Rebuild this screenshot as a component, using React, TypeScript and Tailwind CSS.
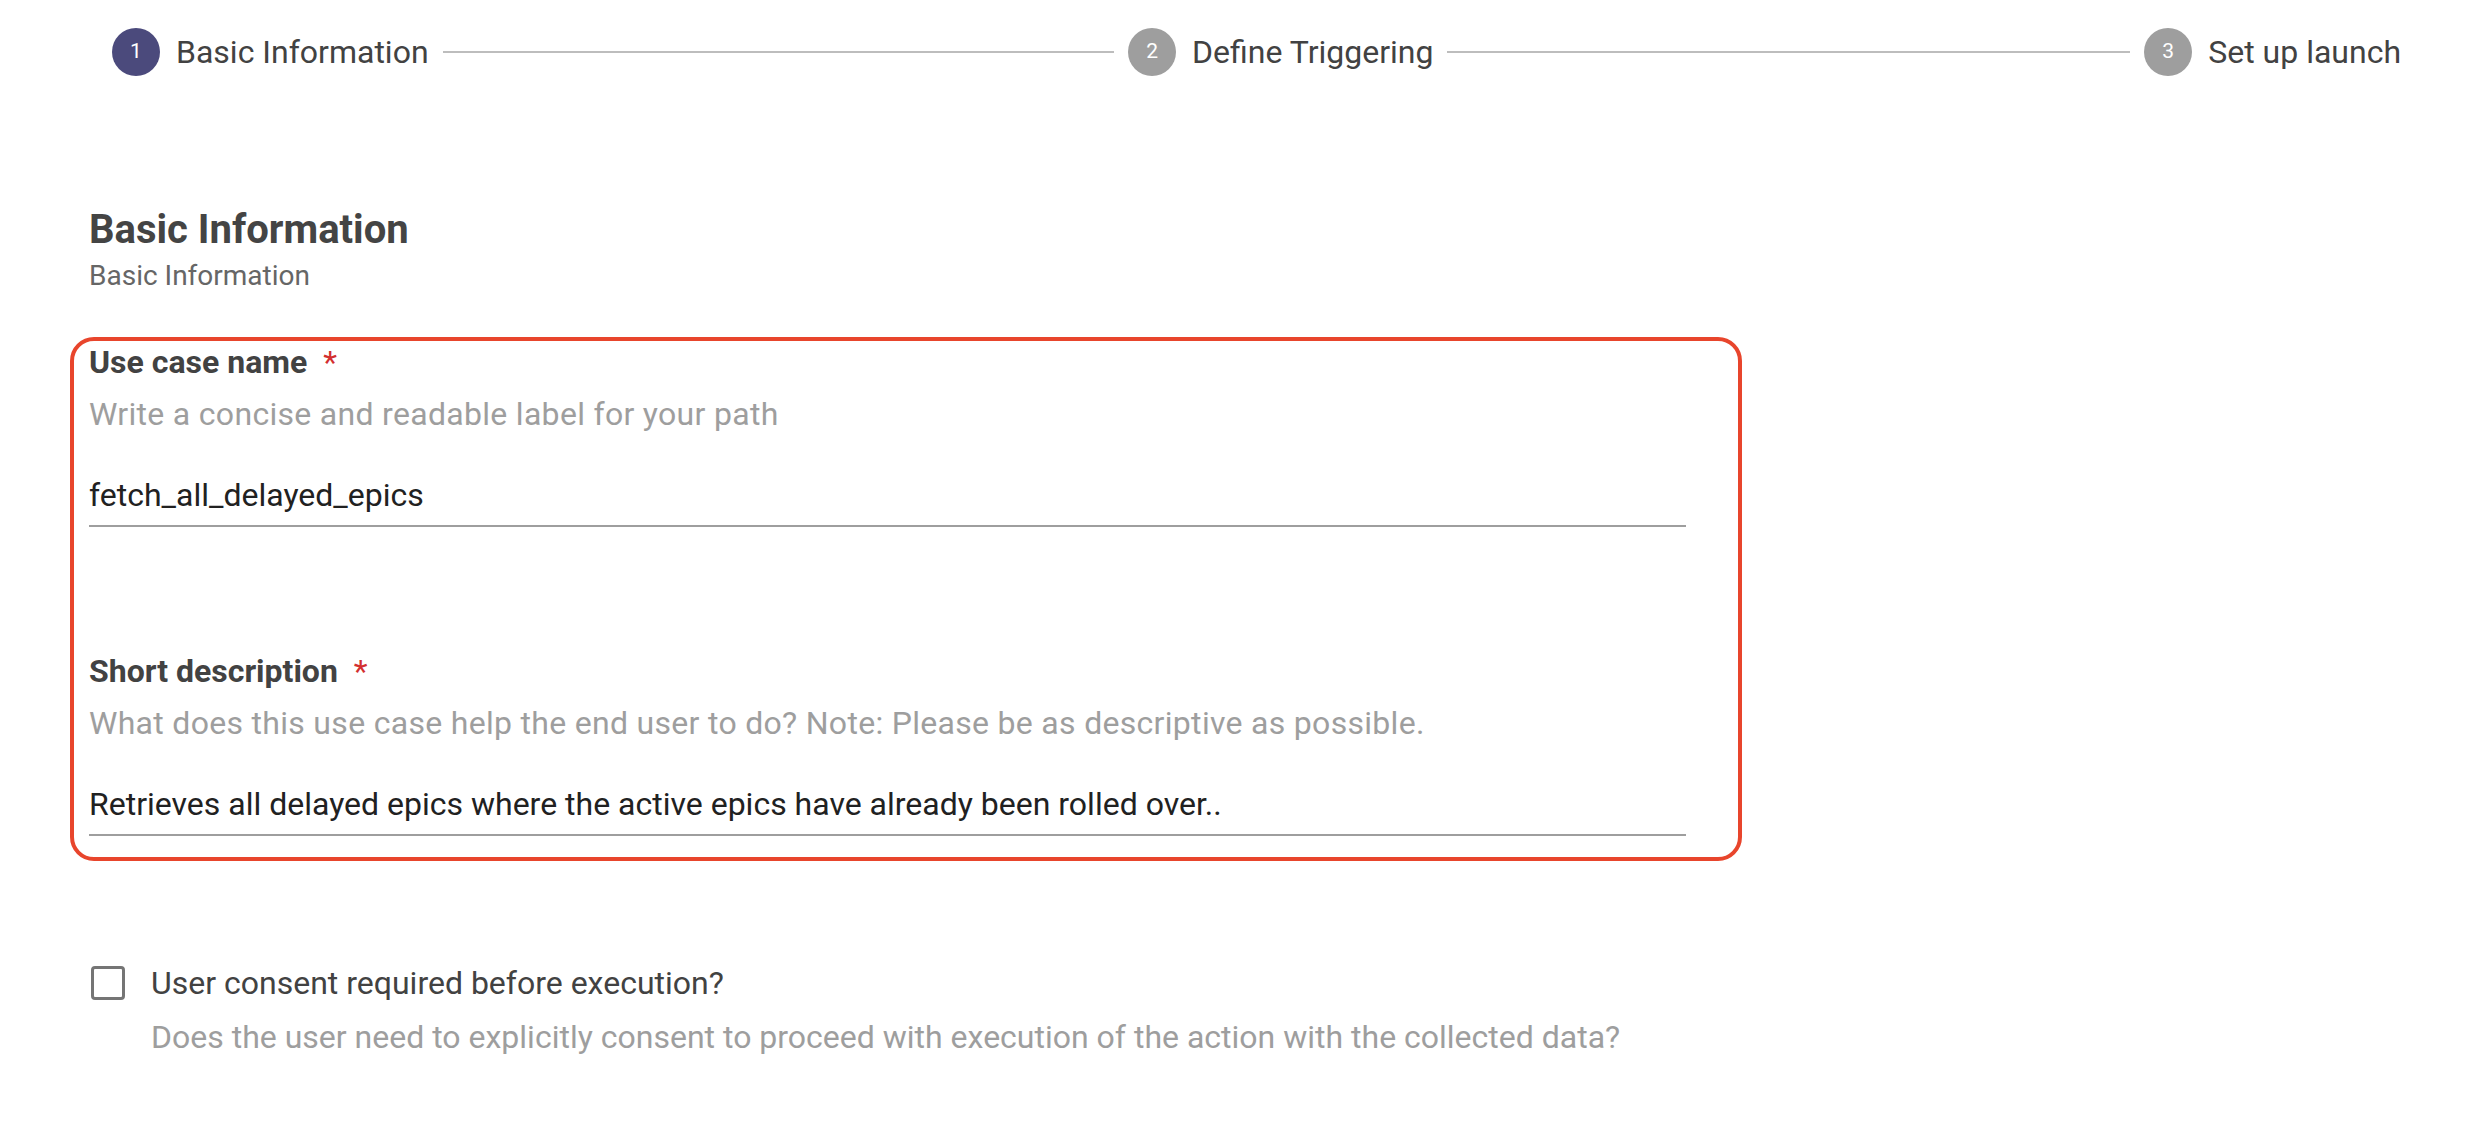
import { useState } from 'react'

const STEPS = [
  { n: 1, label: 'Basic Information', active: true },
  { n: 2, label: 'Define Triggering', active: false },
  { n: 3, label: 'Set up launch', active: false },
]

function Stepper() {
  return (
    <div className="flex items-center gap-[14px] pl-[23px] pt-[28px]">
      {STEPS.map((s, i) => (
        <div key={s.n} className={i < STEPS.length - 1 ? 'flex flex-1 items-center gap-[14px]' : 'flex items-center'}>
          <div className="flex items-center gap-[16px]">
            <span
              className={
                'flex h-12 w-12 shrink-0 items-center justify-center rounded-full text-[21px] text-white ' +
                (s.active ? 'bg-[#4b4a7c]' : 'bg-[#9e9e9e]')
              }
            >
              {s.n}
            </span>
            <span className="whitespace-nowrap text-[32px] leading-[40px] text-[#424242]">{s.label}</span>
          </div>
          {i < STEPS.length - 1 && <div className="h-[2px] flex-1 bg-[#bdbdbd]" />}
        </div>
      ))}
    </div>
  )
}

interface FieldProps {
  label: string
  helper: string
  value: string
  first?: boolean
}

function Field({ label, helper, value, first }: FieldProps) {
  const [text, setText] = useState(value)
  return (
    <div className={first ? '' : 'mt-[126px]'}>
      <div className="text-[32px] font-bold leading-[36px] text-[#424242]">
        {label}
        <span className="ml-[16px] font-normal text-[#d32f2f]">*</span>
      </div>
      <div className="mt-[16px] text-[32px] leading-[36px] tracking-[0.3px] text-[#9e9e9e]">{helper}</div>
      <input
        value={text}
        onChange={(e) => setText(e.target.value)}
        className="mt-[45px] block w-full border-b-2 border-[#9e9e9e] pb-[12px] text-[32px] leading-[36px] text-[#212121] outline-none"
      />
    </div>
  )
}

export default function App() {
  const [consent, setConsent] = useState(false)

  return (
    <div className="min-h-screen bg-white px-[89px] font-['Roboto',sans-serif]">
      <Stepper />

      <div className="mt-[134px]">
        <h2 className="text-[40px] font-bold leading-[40px] text-[#444444]">Basic Information</h2>
        <p className="mt-[10px] text-[28px] leading-[32px] text-[#666666]">Basic Information</p>
      </div>

      {/* highlighted required fields */}
      <div className="-ml-[19px] mt-[45px] w-[1672px] rounded-[24px] border-4 border-[#e8452c] pb-[21px] pl-[15px] pr-[52px] pt-[3px]">
        <Field
          first
          label="Use case name"
          helper="Write a concise and readable label for your path"
          value="fetch_all_delayed_epics"
        />
        <Field
          label="Short description"
          helper="What does this use case help the end user to do? Note: Please be as descriptive as possible."
          value="Retrieves all delayed epics where the active epics have already been rolled over.."
        />
      </div>

      <div className="mt-[104px]">
        <label className="flex cursor-pointer items-center">
          <input
            type="checkbox"
            checked={consent}
            onChange={(e) => setConsent(e.target.checked)}
            className="ml-[2px] h-[34px] w-[34px] shrink-0 cursor-pointer appearance-none rounded-[4px] border-[3px] border-[#757575] checked:bg-[#4b4a7c]"
          />
          <span className="ml-[26px] text-[32px] leading-[36px] text-[#424242]">User consent required before execution?</span>
        </label>
        <p className="ml-[62px] mt-[18px] text-[32px] leading-[36px] text-[#9e9e9e]">
          Does the user need to explicitly consent to proceed with execution of the action with the collected data?
        </p>
      </div>
    </div>
  )
}
